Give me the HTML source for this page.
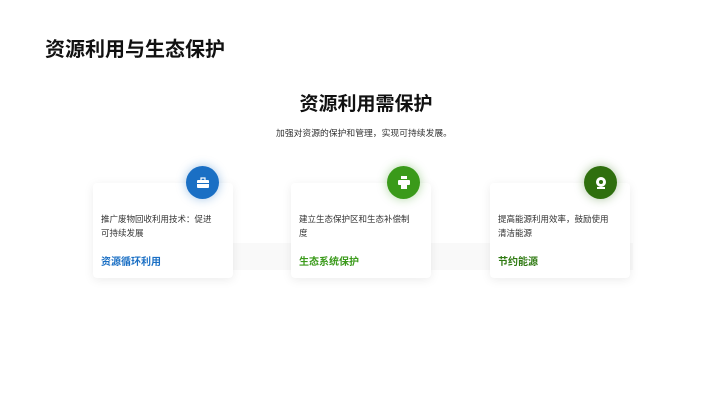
<!DOCTYPE html><html><head><meta charset="utf-8"><style>
body{margin:0;width:720px;height:404px;background:#fff;position:relative;overflow:hidden;font-family:"Liberation Sans","Noto Sans CJK SC",sans-serif;color:#222}
.t{position:absolute;left:45px;top:33px;font-size:20px;font-weight:bold;color:#111}
.h{position:absolute;left:6px;width:720px;text-align:center;top:89px;font-size:19px;font-weight:bold;color:#111}
.s{position:absolute;left:4px;width:720px;text-align:center;top:126px;font-size:8.8px;color:#333}
.band{position:absolute;left:93px;width:540px;top:243px;height:27px;background:#f9f9f9}
.c{position:absolute;top:183px;width:140px;height:95px;background:#fff;border-radius:4px;box-shadow:0 2px 10px rgba(0,0,0,.08)}
.c p{margin:0;position:absolute;left:8px;top:29px;width:118px;font-size:8.5px;line-height:14px;color:#333}
.c b{position:absolute;left:8px;top:70px;font-size:10px}
.i{position:absolute;width:33px;height:33px;border-radius:50%;top:166px;display:flex;align-items:center;justify-content:center}
</style></head><body>
<div class="t">资源利用与生态保护</div>
<div class="h">资源利用需保护</div>
<div class="s">加强对资源的保护和管理，实现可持续发展。</div>
<div class="band"></div>
<div class="c" style="left:93px"><p>推广废物回收利用技术：促进<br>可持续发展</p><b style="color:#1a6fc4">资源循环利用</b></div>
<div class="c" style="left:291px"><p>建立生态保护区和生态补偿制<br>度</p><b style="color:#3a9a1a">生态系统保护</b></div>
<div class="c" style="left:490px"><p>提高能源利用效率，鼓励使用<br>清洁能源</p><b style="color:#2f7a12">节约能源</b></div>
<div class="i" style="left:186px;background:#1a6fc4;box-shadow:0 0 10px rgba(26,111,196,.4)"><svg width="14" height="12" viewBox="0 0 14 12"><rect x="1" y="3" width="12" height="8" rx="1" fill="#fff"/><rect x="5" y="1" width="4" height="3" fill="none" stroke="#fff" stroke-width="1.2"/><rect x="1" y="6" width="12" height="1" fill="#1a6fc4"/></svg></div>
<div class="i" style="left:387px;background:#3a9a1a;box-shadow:0 0 10px rgba(58,154,26,.4)"><svg width="14" height="13" viewBox="0 0 14 13"><rect x="4" y="0" width="6" height="3" fill="#fff"/><rect x="1" y="4" width="12" height="5" rx="1" fill="#fff"/><rect x="4" y="8" width="6" height="5" fill="#fff"/></svg></div>
<div class="i" style="left:584px;background:#2f6f0e;box-shadow:0 0 10px rgba(47,111,14,.4)"><svg width="14" height="14" viewBox="0 0 14 14"><circle cx="7" cy="6" r="5" fill="#fff"/><circle cx="7" cy="6" r="2" fill="#2f6f0e"/><rect x="3" y="11" width="8" height="2" fill="#fff"/></svg></div>
</body></html>
